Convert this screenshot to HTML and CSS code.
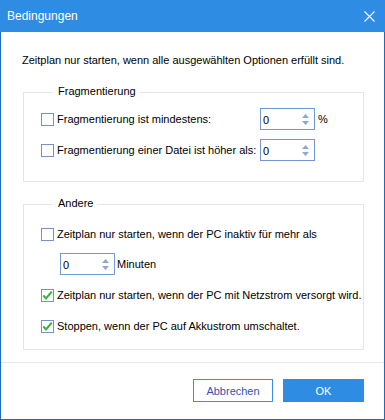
FILE: index.html
```html
<!DOCTYPE html>
<html lang="de">
<head>
<meta charset="utf-8">
<title>Bedingungen</title>
<link rel="stylesheet" href="styles.css">
</head>
<body>
<div class="window">
  <div class="titlebar">
    <span class="title">Bedingungen</span>
    <svg class="close" width="11" height="11" viewBox="0 0 11 11"><path d="M0.5 0.5 L10.5 10.5 M10.5 0.5 L0.5 10.5" stroke="#fff" stroke-width="1.1" fill="none"/></svg>
  </div>
  <div class="frame">
    <div class="content">
      <p class="intro">Zeitplan nur starten, wenn alle ausgewählten Optionen erfüllt sind.</p>

      <fieldset class="group group-frag">
        <legend>Fragmentierung</legend>
        <div class="frag-grid">
          <label class="check"><span class="box"></span>Fragmentierung ist mindestens:</label>
          <div class="spin"><span class="val">0</span><span class="arrows"><svg width="7" height="11" viewBox="0 0 7 11"><path d="M3.5 0 L7 4 L0 4 Z M0 7 L7 7 L3.5 11 Z" fill="#8ea8cc"/></svg></span></div>
          <span class="unit">%</span>

          <label class="check"><span class="box"></span>Fragmentierung einer Datei ist höher als:</label>
          <div class="spin"><span class="val">0</span><span class="arrows"><svg width="7" height="11" viewBox="0 0 7 11"><path d="M3.5 0 L7 4 L0 4 Z M0 7 L7 7 L3.5 11 Z" fill="#8ea8cc"/></svg></span></div>
          <span></span>
        </div>
      </fieldset>

      <fieldset class="group group-other">
        <legend>Andere</legend>
        <div class="other-list">
          <label class="check"><span class="box"></span>Zeitplan nur starten, wenn der PC inaktiv für mehr als</label>
          <div class="minutes">
            <div class="spin"><span class="val">0</span><span class="arrows"><svg width="7" height="11" viewBox="0 0 7 11"><path d="M3.5 0 L7 4 L0 4 Z M0 7 L7 7 L3.5 11 Z" fill="#8ea8cc"/></svg></span></div>
            <span class="unit-min">Minuten</span>
          </div>
          <label class="check"><span class="box"><svg width="13" height="13" viewBox="0 0 13 13"><path d="M2.3 6.4 L5 9.4 L10.8 2.6" stroke="#3cb043" stroke-width="2.1" fill="none"/></svg></span>Zeitplan nur starten, wenn der PC mit Netzstrom versorgt wird.</label>
          <label class="check"><span class="box"><svg width="13" height="13" viewBox="0 0 13 13"><path d="M2.3 6.4 L5 9.4 L10.8 2.6" stroke="#3cb043" stroke-width="2.1" fill="none"/></svg></span>Stoppen, wenn der PC auf Akkustrom umschaltet.</label>
        </div>
      </fieldset>
    </div>
    <div class="footer">
      <button class="btn btn-cancel">Abbrechen</button>
      <button class="btn btn-ok">OK</button>
    </div>
  </div>
</div>
</body>
</html>
```

FILE: styles.css
```css
* { box-sizing: border-box; }

html, body {
  margin: 0;
  padding: 0;
  background: #fff;
}

body {
  font-family: "Liberation Sans", Arial, sans-serif;
  font-size: 11px;
  color: #000;
}

.window {
  width: 385px;
  height: 420px;
  display: flex;
  flex-direction: column;
}

.titlebar {
  height: 32px;
  flex: none;
  background: #2e8ce3;
  color: #fff;
  font-size: 12px;
  display: flex;
  align-items: center;
  justify-content: space-between;
  padding: 0 10px 0 7px;
}

.title {
  line-height: 14px;
}

.close {
  display: block;
}

.frame {
  flex: 1;
  display: flex;
  flex-direction: column;
  border: 1px solid #1c6cbc;
  border-top: none;
}

.content {
  flex: 1;
  padding: 21px 20px 0 21px;
}

.intro {
  margin: 0;
  line-height: 14px;
}

.group {
  margin: 0 0 0 1px;
  border: 1px solid #e1e6ec;
  padding: 0 10px 0 17px;
  min-width: 0;
}

.group legend {
  margin-left: 11px;
  padding: 0 4px 3px 6px;
  line-height: 14px;
}

.group-frag {
  margin-top: 17px;
  padding-top: 7px;
  padding-bottom: 20px;
}

.group-other {
  margin-top: 14px;
  padding-top: 10px;
  padding-bottom: 12px;
}

.frag-grid {
  display: grid;
  grid-template-columns: 219px 55px auto;
  grid-auto-rows: 22px;
  row-gap: 9px;
  align-items: center;
}

.check {
  display: flex;
  align-items: center;
  gap: 3px;
  height: 22px;
  line-height: 14px;
  white-space: nowrap;
}

.box {
  width: 13px;
  height: 13px;
  flex: none;
  border: 1px solid #7294cc;
  background: #fff;
  position: relative;
}

.box svg {
  position: absolute;
  left: -1px;
  top: -1px;
}

.spin {
  width: 55px;
  height: 22px;
  border: 1px solid #7397d4;
  background: #fff;
  display: flex;
  align-items: center;
  justify-content: space-between;
  padding: 1px 5px 0 2px;
}

.val {
  line-height: 14px;
}

.arrows svg {
  display: block;
}

.unit {
  margin-left: 3px;
}

.other-list {
  display: flex;
  flex-direction: column;
  gap: 9px;
}

.minutes {
  display: flex;
  align-items: center;
  gap: 2px;
  margin-left: 19px;
  margin-top: -1px;
}

.footer {
  height: 57px;
  flex: none;
  border-top: 1px solid #e3e8ee;
  display: flex;
  justify-content: flex-end;
  align-items: flex-start;
  gap: 10px;
  padding: 16px 20px 0 0;
}

.btn {
  height: 23px;
  width: 80px;
  font-family: "Liberation Sans", Arial, sans-serif;
  font-size: 11px;
  padding: 0;
  margin: 0;
  cursor: default;
}

.btn-cancel {
  background: #fff;
  border: 1px solid #3a8fe0;
  color: #3551b8;
}

.btn-ok {
  width: 81px;
  background: #2e8ce3;
  border: none;
  color: #fff;
}
```
